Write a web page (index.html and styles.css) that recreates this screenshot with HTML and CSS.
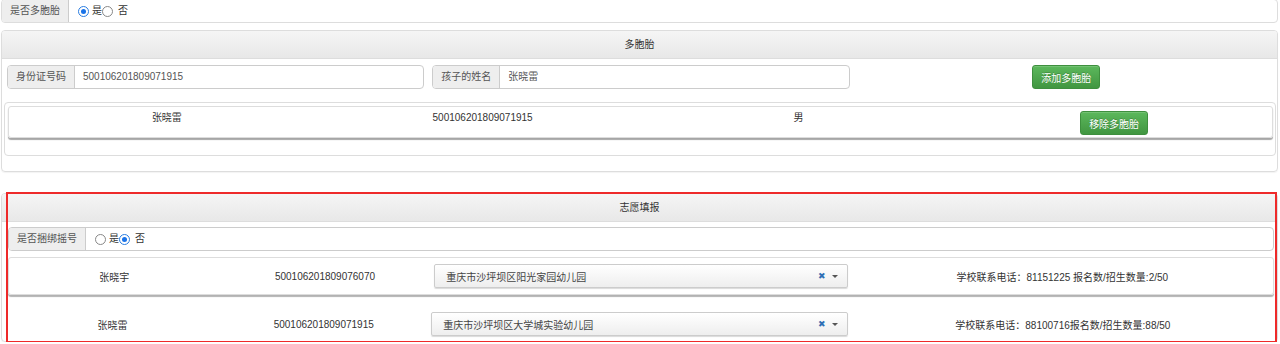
FILE: index.html
```html
<!DOCTYPE html>
<html lang="zh-CN">
  <head>
    <meta charset="UTF-8" />
    <meta name="viewport" content="width=device-width, initial-scale=1.0" />
    <title>multiple-birth</title>
    <link rel="stylesheet" href="styles.css">
  </head>
  <body>
    <div class="page">
      <!-- multiple birth switch -->
      <div class="input-group top-group">
        <span class="addon">是否多胞胎</span>
        <div class="radios">
          <span class="radio checked"></span><span class="rtext">是</span><span class="radio"></span><span class="rtext gap">否</span>
        </div>
      </div>

      <div class="panel">
        <div class="panel-heading">多胞胎</div>
        <div class="panel-body">
          <div class="form-row">
            <div class="input-group">
              <span class="addon">身份证号码</span>
              <span class="field">500106201809071915</span>
            </div>
            <div class="input-group">
              <span class="addon">孩子的姓名</span>
              <span class="field">张晓雷</span>
            </div>
            <div class="btn-cell">
              <button class="btn-success">添加多胞胎</button>
            </div>
          </div>
        </div>
        <div class="well">
          <div class="child-row">
            <div class="cell">张晓雷</div>
            <div class="cell">500106201809071915</div>
            <div class="cell">男</div>
            <div class="cell"><button class="btn-success small">移除多胞胎</button></div>
          </div>
        </div>
      </div>

      <!-- wish form -->
      <div class="panel wish">
        <div class="panel-heading">志愿填报</div>
        <div class="panel-body">
          <div class="input-group">
            <span class="addon">是否捆绑摇号</span>
            <div class="radios">
              <span class="radio"></span><span class="rtext">是</span><span class="radio checked"></span><span class="rtext gap">否</span>
            </div>
          </div>

          <div class="wish-row boxed">
            <div class="cell">张晓宇</div>
            <div class="cell">500106201809076070</div>
            <div class="cell sel">
              <div class="select2">
                <span>重庆市沙坪坝区阳光家园幼儿园</span>
                <span class="x">✖</span><span class="caret"></span>
              </div>
            </div>
            <div class="cell">学校联系电话：81151225 报名数/招生数量:2/50</div>
          </div>

          <div class="wish-row plain">
            <div class="cell">张晓雷</div>
            <div class="cell">500106201809071915</div>
            <div class="cell sel">
              <div class="select2">
                <span>重庆市沙坪坝区大学城实验幼儿园</span>
                <span class="x">✖</span><span class="caret"></span>
              </div>
            </div>
            <div class="cell">学校联系电话：88100716报名数/招生数量:88/50</div>
          </div>
        </div>
        <div class="red-mark"></div>
      </div>
    </div>
  </body>
</html>
```

FILE: styles.css
```css
body {
  margin: 0;
  padding: 0;
  font-family: "Liberation Sans", "Noto Sans CJK SC", sans-serif;
  font-size: 10px;
  color: #333;
  background: #fff;
}
.page {
  padding: 0 2px 0 1px;
}

/* input groups */
.input-group {
  display: flex;
  height: 24px;
  box-sizing: border-box;
  border: 1px solid #ccc;
  border-radius: 4px;
  overflow: hidden;
  line-height: 22px;
}
.top-group {
  margin-top: -1px;
  border-color: #ddd;
}
.addon {
  background: #eee;
  color: #555;
  padding: 0 8px;
  border-right: 1px solid #ccc;
  white-space: nowrap;
}
.field {
  padding: 0 8px;
  color: #555;
}
.radios {
  display: flex;
  align-items: center;
  padding-left: 9px;
}
.radio {
  width: 9px;
  height: 9px;
  border: 1px solid #888;
  border-radius: 50%;
  box-sizing: content-box;
  background: #fff;
  position: relative;
}
.radio.checked {
  border-color: #2a7de1;
}
.radio.checked::after {
  content: "";
  position: absolute;
  left: 2px;
  top: 2px;
  width: 5px;
  height: 5px;
  border-radius: 50%;
  background: #1a73e8;
}
.rtext {
  margin-left: 3px;
  color: #333;
}
.rtext.gap {
  margin-left: 5px;
}

/* panels */
.panel {
  border: 1px solid #ddd;
  border-radius: 4px;
  margin-top: 7px;
  box-shadow: 0 1px 1px rgba(0, 0, 0, 0.05);
}
.panel-heading {
  height: 27px;
  line-height: 28px;
  text-align: center;
  color: #333;
  background: linear-gradient(#f5f5f5, #e8e8e8);
  border-bottom: 1px solid #ddd;
  border-radius: 3px 3px 0 0;
}
.panel-body {
  padding: 6px 2px 0 5px;
}
.form-row {
  display: grid;
  grid-template-columns: repeat(3, 1fr);
  column-gap: 8px;
}
.btn-cell {
  text-align: center;
}
.btn-success {
  font-family: inherit;
  font-size: 10px;
  color: #fff;
  height: 24px;
  padding: 0 8px;
  border: 1px solid #3e8f3e;
  border-radius: 3px;
  background: linear-gradient(#5cb85c, #419641);
  text-shadow: 0 -1px 0 rgba(0, 0, 0, 0.2);
  box-shadow: inset 0 1px 0 rgba(255, 255, 255, 0.15);
}
.btn-success.small {
  height: 24px;
  padding: 0 8px;
}

.well {
  margin: 13px 1px 15px 2px;
  border: 1px solid #ddd;
  border-radius: 4px;
  padding: 3px 2px 17px 3px;
}
.child-row {
  display: grid;
  grid-template-columns: repeat(4, 1fr);
  height: 32px;
  box-sizing: border-box;
  border: 1px solid #ddd;
  border-radius: 3px;
  box-shadow: 0 2px 1px rgba(0, 0, 0, 0.35);
  padding-top: 4px;
}
.child-row .cell {
  text-align: center;
  line-height: 14px;
}

/* wish form */
.wish {
  margin-top: 21px;
  position: relative;
}
.wish .panel-body {
  padding: 5px 3px 3px 6px;
}
.wish-row {
  display: grid;
  grid-template-columns: 1fr 1fr 2fr 2fr;
  align-items: center;
}
.wish-row .cell {
  text-align: center;
  color: #333;
}
.wish-row .sel {
  padding: 0 4px;
}
.boxed {
  margin-top: 6px;
  height: 38px;
  box-sizing: border-box;
  border: 1px solid #ddd;
  border-radius: 3px;
  box-shadow: 0 2px 1px rgba(0, 0, 0, 0.3);
}
.plain {
  margin-top: 15px;
  height: 28px;
  margin-left: -1px;
}
.plain .sel {
  padding: 0 4px 0 2px;
}
.select2 {
  display: flex;
  align-items: center;
  height: 24px;
  box-sizing: border-box;
  border: 1px solid #ccc;
  border-radius: 2px;
  background: linear-gradient(#fff, #eee);
  box-shadow: 0 1px 1px rgba(0, 0, 0, 0.15);
  padding: 0 9px 0 11px;
  text-align: left;
  color: #444;
}
.select2 span:first-child {
  flex: 1;
}
.select2 .x {
  color: #2f6fb5;
  font-size: 9px;
  margin-right: 6px;
}
.caret {
  width: 0;
  height: 0;
  border-left: 3px solid transparent;
  border-right: 3px solid transparent;
  border-top: 3px solid #555;
}
.red-mark {
  position: absolute;
  left: 4px;
  top: -2px;
  right: 0;
  bottom: -2px;
  border: 2px solid #ee2a2a;
  pointer-events: none;
}
```
